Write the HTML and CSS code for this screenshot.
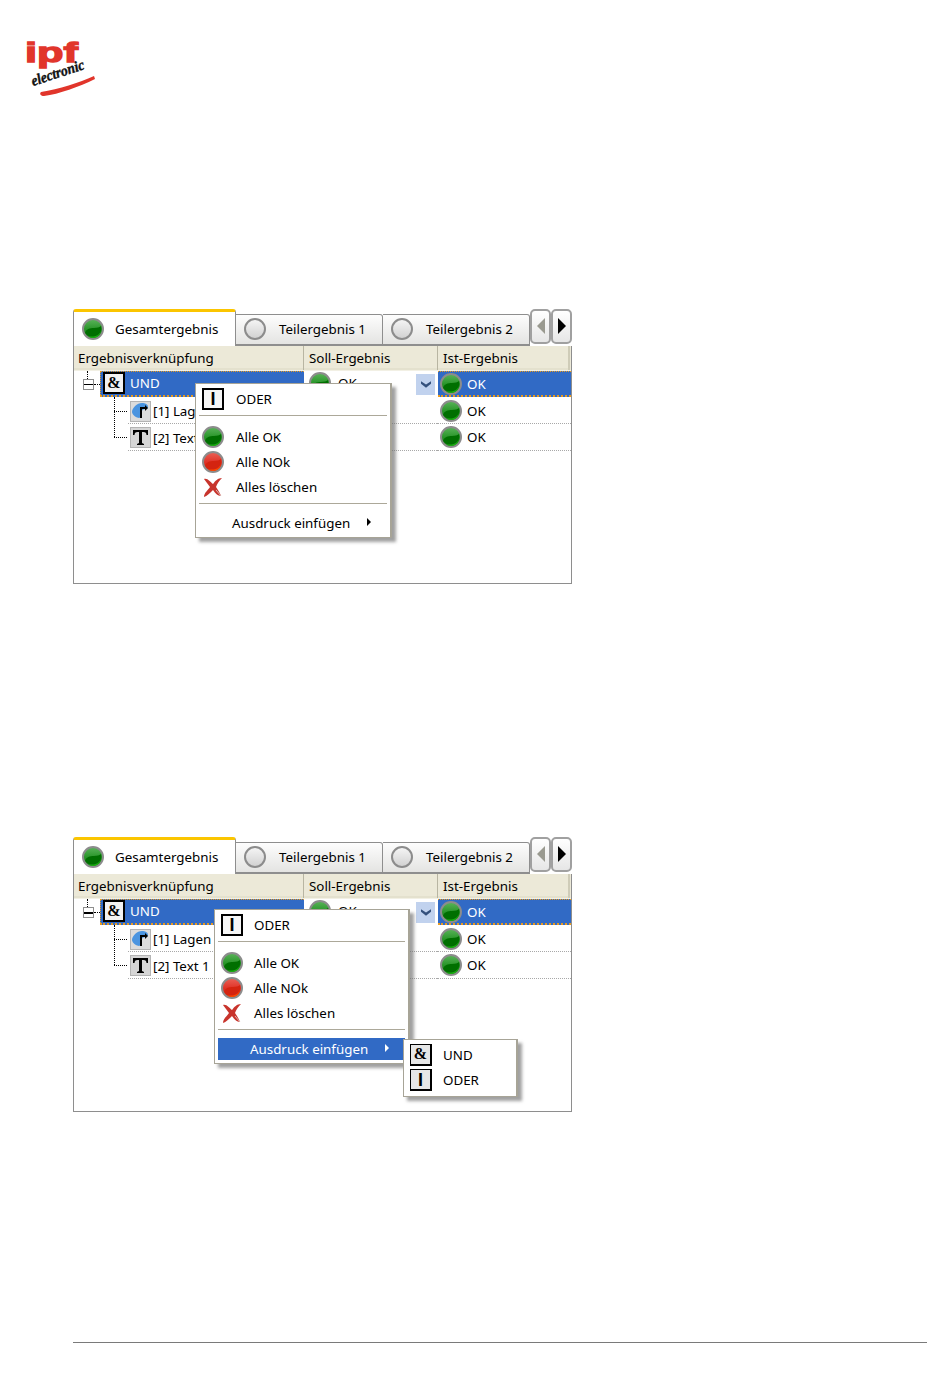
FILE: index.html
```html
<!DOCTYPE html>
<html lang="de">
<head>
<meta charset="utf-8">
<title>Ergebnisverknüpfung</title>
<link rel="stylesheet" href="styles.css">
</head>
<body>
<svg class="defs" width="0" height="0" aria-hidden="true">
  <defs>
    <linearGradient id="gGreen" x1="0" y1="0" x2="0" y2="1"><stop offset="0" stop-color="#5cb45c"/><stop offset=".5" stop-color="#2a962a"/><stop offset="1" stop-color="#0a6a0a"/></linearGradient>
    <linearGradient id="gRed" x1="0" y1="0" x2="0" y2="1"><stop offset="0" stop-color="#ea6258"/><stop offset=".5" stop-color="#e03428"/><stop offset="1" stop-color="#c81800"/></linearGradient>
    <linearGradient id="gGrey" x1="0" y1="0" x2="0" y2="1"><stop offset="0" stop-color="#f6f6f6"/><stop offset="1" stop-color="#d0d0d0"/></linearGradient>
    <symbol id="led-green" viewBox="0 0 22 22"><circle cx="11" cy="11" r="10" fill="url(#gGreen)" stroke="#8c8c8c" stroke-width="2"/><path d="M3 15c1-4 5-5 9-5 3 0 6-1 7-2 1 4 0 7-2 9-3 3-10 3-14-2z" fill="#006f00"/><path d="M6 18c3 1 8 1 11-2 1-1 2-3 2-4 0 5-4 8-8 8-2 0-4-1-5-2z" fill="#19b010"/></symbol>
    <symbol id="led-red" viewBox="0 0 22 22"><circle cx="11" cy="11" r="10" fill="url(#gRed)" stroke="#8c8c8c" stroke-width="2"/><path d="M3 15c1-4 5-5 9-5 3 0 6-1 7-2 1 4 0 7-2 9-3 3-10 3-14-2z" fill="#d42410"/><path d="M6 18c3 1 8 1 11-2 1-1 2-3 2-4 0 5-4 8-8 8-2 0-4-1-5-2z" fill="#ff4a00"/></symbol>
    <symbol id="led-off" viewBox="0 0 22 22"><circle cx="11" cy="11" r="10" fill="url(#gGrey)" stroke="#8c8c8c" stroke-width="2"/></symbol>
    <symbol id="cross" viewBox="0 0 22 22"><path d="M2 3c4-1 6 3 9 5 2-3 5-6 9-6-3 3-5 6-6 9 2 3 4 6 5 9-3 0-6-3-8-6-3 3-6 6-9 7 0-4 4-7 6-10-2-3-4-5-6-8z" fill="#c8342c"/><path d="M14 14c2 2 3 4 5 6" stroke="#d9b8b4" fill="none"/></symbol>
    <symbol id="ico-pos" viewBox="0 0 21 21"><rect x=".5" y=".5" width="20" height="20" fill="#dcdcdc" stroke="#b4b4b4"/><path d="M2 11c0-4 5-9 10-9 3 0 6 1 6 4s-5 1-6 4-1 7-3 7-7-3-7-6z" fill="#4a94e0"/><path d="M17 7h-6v10" fill="none" stroke="#000" stroke-width="2"/><path d="M15 4l3 3-3 3z" fill="#000"/></symbol>
    <symbol id="ico-text" viewBox="0 0 21 21"><rect x=".5" y=".5" width="20" height="20" fill="#d6d6d6" stroke="#b4b4b4"/><path d="M3 3h15v5h-1.500c0-2-1-3-3-3h-1.500v11l2 1v1h-7v-1l2-1v-11h-1.500c-2 0-3 1-3 3h-1.500z" fill="#000"/></symbol>
  </defs>
</svg>

<div class="page">
  <header class="logo">
    <svg width="73" height="58" viewBox="0 0 73 58" role="img" aria-label="ipf electronic">
      <text class="logo-ipf" x="1" y="22" textLength="53" lengthAdjust="spacingAndGlyphs">ipf</text>
      <text class="logo-sub" x="9" y="46" transform="rotate(-18 9 46)" textLength="55" lengthAdjust="spacingAndGlyphs">electronic</text>
      <path d="M17 52C35 49 55 43 70 36l1 3C55 47 35 54 20 56c-3 0-5-2-3-4z" fill="#e1352b"/>
    </svg>
  </header>

  <section class="shot shot-first">
    <nav class="tabs">
      <div class="tab tab-active"><svg class="led"><use href="#led-green"/></svg><span>Gesamtergebnis</span></div>
      <div class="tab"><svg class="led"><use href="#led-off"/></svg><span>Teilergebnis 1</span></div>
      <div class="tab"><svg class="led"><use href="#led-off"/></svg><span>Teilergebnis 2</span></div>
      <div class="scroll-btn"><svg width="10" height="16" viewBox="0 0 10 16"><path d="M9 0v16L1 8z" fill="#9a9a90"/></svg></div>
      <div class="scroll-btn"><svg width="10" height="16" viewBox="0 0 10 16"><path d="M1 0v16l8-8z" fill="#000"/></svg></div>
    </nav>
    <div class="panel">
      <div class="grid-head"><div class="col-a">Ergebnisverknüpfung</div><div class="col-b">Soll-Ergebnis</div><div class="col-c">Ist-Ergebnis</div></div>
      <div class="row row-top">
        <div class="col-a tree-root"><i class="tree-v-top"></i><i class="expander"></i><i class="tree-h-root"></i>
          <div class="root-sel"><i class="op-icon">&amp;</i><span>UND</span></div></div>
        <div class="col-b"><svg class="led"><use href="#led-green"/></svg><span>OK</span><i class="drop"><svg width="10" height="7" viewBox="0 0 12 8"><path d="M0 0l6 4 6-4v3l-6 5-6-5z" fill="#34507c"/></svg></i></div>
        <div class="col-c sel"><svg class="led"><use href="#led-green"/></svg><span>OK</span></div>
      </div>
      <div class="row row-mid">
        <div class="col-a tree-child"><i class="tree-v"></i><i class="tree-h"></i><svg class="node"><use href="#ico-pos"/></svg><span class="label">[1] Lagen</span></div>
        <div class="col-b"></div>
        <div class="col-c"><svg class="led"><use href="#led-green"/></svg><span>OK</span></div>
      </div>
      <div class="row">
        <div class="col-a tree-child"><i class="tree-h"></i><svg class="node"><use href="#ico-text"/></svg><span class="label">[2] Text 1</span></div>
        <div class="col-b"></div>
        <div class="col-c"><svg class="led"><use href="#led-green"/></svg><span>OK</span></div>
      </div>
    </div>
    <div class="menu menu-a">
      <div class="mi"><i class="op-icon op-plain">I</i><span>ODER</span></div>
      <hr class="sep sep-1">
      <div class="mi"><svg class="led"><use href="#led-green"/></svg><span>Alle OK</span></div>
      <div class="mi"><svg class="led"><use href="#led-red"/></svg><span>Alle NOk</span></div>
      <div class="mi"><svg class="led"><use href="#cross"/></svg><span>Alles löschen</span></div>
      <hr class="sep sep-2">
      <div class="mi mi-sub"><span>Ausdruck einfügen</span><i class="arrow"></i></div>
    </div>
  </section>

  <section class="shot shot-second">
    <nav class="tabs">
      <div class="tab tab-active"><svg class="led"><use href="#led-green"/></svg><span>Gesamtergebnis</span></div>
      <div class="tab"><svg class="led"><use href="#led-off"/></svg><span>Teilergebnis 1</span></div>
      <div class="tab"><svg class="led"><use href="#led-off"/></svg><span>Teilergebnis 2</span></div>
      <div class="scroll-btn"><svg width="10" height="16" viewBox="0 0 10 16"><path d="M9 0v16L1 8z" fill="#9a9a90"/></svg></div>
      <div class="scroll-btn"><svg width="10" height="16" viewBox="0 0 10 16"><path d="M1 0v16l8-8z" fill="#000"/></svg></div>
    </nav>
    <div class="panel">
      <div class="grid-head"><div class="col-a">Ergebnisverknüpfung</div><div class="col-b">Soll-Ergebnis</div><div class="col-c">Ist-Ergebnis</div></div>
      <div class="row row-top">
        <div class="col-a tree-root"><i class="tree-v-top"></i><i class="expander"></i><i class="tree-h-root"></i>
          <div class="root-sel"><i class="op-icon">&amp;</i><span>UND</span></div></div>
        <div class="col-b"><svg class="led"><use href="#led-green"/></svg><span>OK</span><i class="drop"><svg width="10" height="7" viewBox="0 0 12 8"><path d="M0 0l6 4 6-4v3l-6 5-6-5z" fill="#34507c"/></svg></i></div>
        <div class="col-c sel"><svg class="led"><use href="#led-green"/></svg><span>OK</span></div>
      </div>
      <div class="row row-mid">
        <div class="col-a tree-child"><i class="tree-v"></i><i class="tree-h"></i><svg class="node"><use href="#ico-pos"/></svg><span class="label">[1] Lagen</span></div>
        <div class="col-b"></div>
        <div class="col-c"><svg class="led"><use href="#led-green"/></svg><span>OK</span></div>
      </div>
      <div class="row">
        <div class="col-a tree-child"><i class="tree-h"></i><svg class="node"><use href="#ico-text"/></svg><span class="label">[2] Text 1</span></div>
        <div class="col-b"></div>
        <div class="col-c"><svg class="led"><use href="#led-green"/></svg><span>OK</span></div>
      </div>
    </div>
    <div class="menu menu-b">
      <div class="mi"><i class="op-icon op-plain">I</i><span>ODER</span></div>
      <hr class="sep sep-1">
      <div class="mi"><svg class="led"><use href="#led-green"/></svg><span>Alle OK</span></div>
      <div class="mi"><svg class="led"><use href="#led-red"/></svg><span>Alle NOk</span></div>
      <div class="mi"><svg class="led"><use href="#cross"/></svg><span>Alles löschen</span></div>
      <hr class="sep sep-2">
      <div class="mi mi-sub mi-hot"><span>Ausdruck einfügen</span><i class="arrow"></i></div>
      <div class="menu submenu">
        <div class="mi"><i class="op-icon op-grey">&amp;</i><span>UND</span></div>
        <div class="mi"><i class="op-icon op-grey op-plain">I</i><span>ODER</span></div>
      </div>
    </div>
  </section>

  <footer class="rule"></footer>
</div>
</body>
</html>
```

FILE: styles.css
```css
* { box-sizing: border-box; }
html, body { margin: 0; padding: 0; background: #fff; }
body { font-family: "Noto Sans", "Open Sans", sans-serif; font-size: 13.35px; color: #000; }
i { font-style: normal; display: block; }
.defs { display: block; }
.page { height: 1387px; padding-top: 40px; overflow: hidden; }

.logo { height: 58px; margin-left: 24px; }
.logo svg { display: block; overflow: visible; }
.logo-ipf { font: 900 28px "Liberation Sans", sans-serif; fill: #e1352b; stroke: #e1352b; stroke-width: 1.3px; }
.logo-sub { font: italic 700 15px "Liberation Serif", serif; fill: #111; stroke: #111; stroke-width: .4px; }

.shot { position: relative; margin-left: 73px; width: 499px; height: 275px; }
.shot-first { margin-top: 211px; }
.shot-second { margin-top: 253px; }

.tabs { display: flex; align-items: flex-start; height: 37px; }
.tab {
  display: flex; align-items: center; width: 147px; height: 32px; margin-top: 5px;
  padding: 0 0 1px 8px; gap: 13px;
  border: 1px solid #8e8e8e; border-left: 0; border-bottom: 2px solid #8e8e8e;
  border-radius: 0 3px 0 0;
  background: linear-gradient(#fdfdfd, #e4e4e2);
}
.tab-active {
  width: 163px; height: 37px; margin-top: 0; padding: 0 0 0 8px; gap: 11px;
  border: 0; border-top: 3px solid #fbc500; border-left: 1px solid #8e8e8e; border-right: 1px solid #8e8e8e;
  border-radius: 3px 3px 0 0; background: #fff; position: relative; z-index: 1;
}
.led { width: 22px; height: 22px; flex: none; display: block; }
.scroll-btn {
  width: 21px; height: 35px; flex: none; display: flex; align-items: center; justify-content: center;
  border: 2px solid #a0a0a0; border-radius: 5px; background: linear-gradient(#fff, #e6e6e6);
  padding-bottom: 2px;
}

.panel { height: 238px; border: 1px solid #8e8e8e; border-top: 0; }
.grid-head {
  display: grid; grid-template-columns: 229px 134px 133px; height: 25px; background: #ecE9d8;
  line-height: 24px; border-bottom: 1px solid #f2f0e4;
}
.grid-head > div { padding-left: 4px; box-shadow: inset 0 -2px 0 #e4e1ce; }
.grid-head .col-b, .grid-head .col-c { border-left: 1px solid #b8b5a2; padding-left: 5px; }
.grid-head .col-c { border-right: 2px solid #cfccb8; }

.row { display: grid; grid-template-columns: 229px 134px 134px; height: 27px; }
.row-top { height: 26px; }
.row-mid > div { padding-top: 1px; }
.col-b, .col-c { display: flex; align-items: center; gap: 7px; padding-left: 3px; }
.row .col-a, .row .col-b, .row .col-c { position: relative; }
.row:not(.row-top) > .col-b, .row:not(.row-top) > .col-c { border-bottom: 1px dotted #a8a8a8; }
.row-top > .col-b { padding-left: 6px; padding-bottom: 2px; }
.row > .col-c { padding-left: 3px; gap: 5px; }
.sel { background: #316ac5; color: #fff; border-top: 1px dotted #e89a20; border-bottom: 2px dotted #e89a20; margin-left: 1px; }
.row > .col-c.sel { padding-left: 2px; }

.tree-root { padding-left: 26px; display: flex; }
.root-sel {
  flex: 1; display: flex; align-items: center; gap: 5px; padding: 0 0 1px 2px; color: #fff;
  background: #316ac5; border-top: 1px dotted #e89a20; border-bottom: 2px dotted #e89a20; border-left: 1px dotted #e89a20;
  margin-right: -1px; position: relative;
}
.op-icon {
  width: 22px; height: 22px; flex: none; display: flex; align-items: center; justify-content: center;
  background: #f2f2f2; color: #000; border: 2px solid #000;
  font: 700 16px/1 "Liberation Serif", serif;
}
.op-plain { font: 700 18px/1 "Liberation Sans", sans-serif; background: #f6f6f6; }
.op-grey { background: #e6e6e6; border-width: 1px 2px 2px 1px; }
.tree-v-top { position: absolute; left: 13px; top: 0; height: 8px; border-left: 1px dotted #000; }
.expander {
  position: absolute; left: 9px; top: 8px; width: 11px; height: 11px;
  border: 1px solid #8e8e8e; background: linear-gradient(#fff 4px, #000 4px, #000 5.5px, #fff 5.5px);
}
.tree-h-root { position: absolute; left: 20px; top: 13px; width: 6px; border-top: 1px dotted #000; }
.tree-child { display: flex; align-items: center; padding-left: 56px; gap: 2px; white-space: nowrap; }
.tree-child::after { content: ""; position: absolute; left: 54px; right: 0; bottom: 0; border-bottom: 1px dotted #a8a8a8; }
.tree-v { position: absolute; left: 40px; top: 0; height: 40px; border-left: 1px dotted #000; }
.tree-h { position: absolute; left: 40px; top: 13px; width: 13px; border-top: 1px dotted #000; }
.row-mid .tree-h { top: 14px; }
.node { width: 21px; height: 21px; flex: none; display: block; }

.drop {
  position: absolute; left: 113px; top: 3px; width: 19px; height: 21px;
  display: flex; align-items: center; justify-content: center; background: #c1d2ee;
}

.menu {
  position: absolute; z-index: 5; background: #fff; border: 1px solid #a7a497; border-width: 1px 2px 1px 1px;
  padding: 2px 3px; box-shadow: 4px 4px 3px rgba(110,110,110,.65);
}
.menu-a { left: 122px; top: 74px; width: 197px; height: 155px; }
.menu-b { left: 141px; top: 72px; width: 196px; height: 155px; }
.submenu { left: 188px; top: 129px; width: 115px; height: 58px; padding: 2px 3px; z-index: 6; }
.mi { display: flex; align-items: center; height: 25px; padding-left: 3px; gap: 12px; }
.menu-b > .mi { gap: 11px; }
.sep { height: 1px; margin: 4px 0 8px; border: 0; background: #aca899; }
.sep-2 { margin: 4px 0 8px; }
.mi-sub { position: relative; height: 22px; padding-left: 33px; }
.menu-b > .mi-sub { padding-left: 32px; }
.mi-hot { background: #316ac5; color: #fff; }
.arrow { position: absolute; right: 16px; top: 6px; border: 4px solid transparent; border-left-color: currentColor; border-right: 0; }
.submenu .mi { height: 25.5px; gap: 11px; }

.rule { margin: 230px 0 0 73px; width: 854px; height: 1px; background: #7a7a7a; }
```
